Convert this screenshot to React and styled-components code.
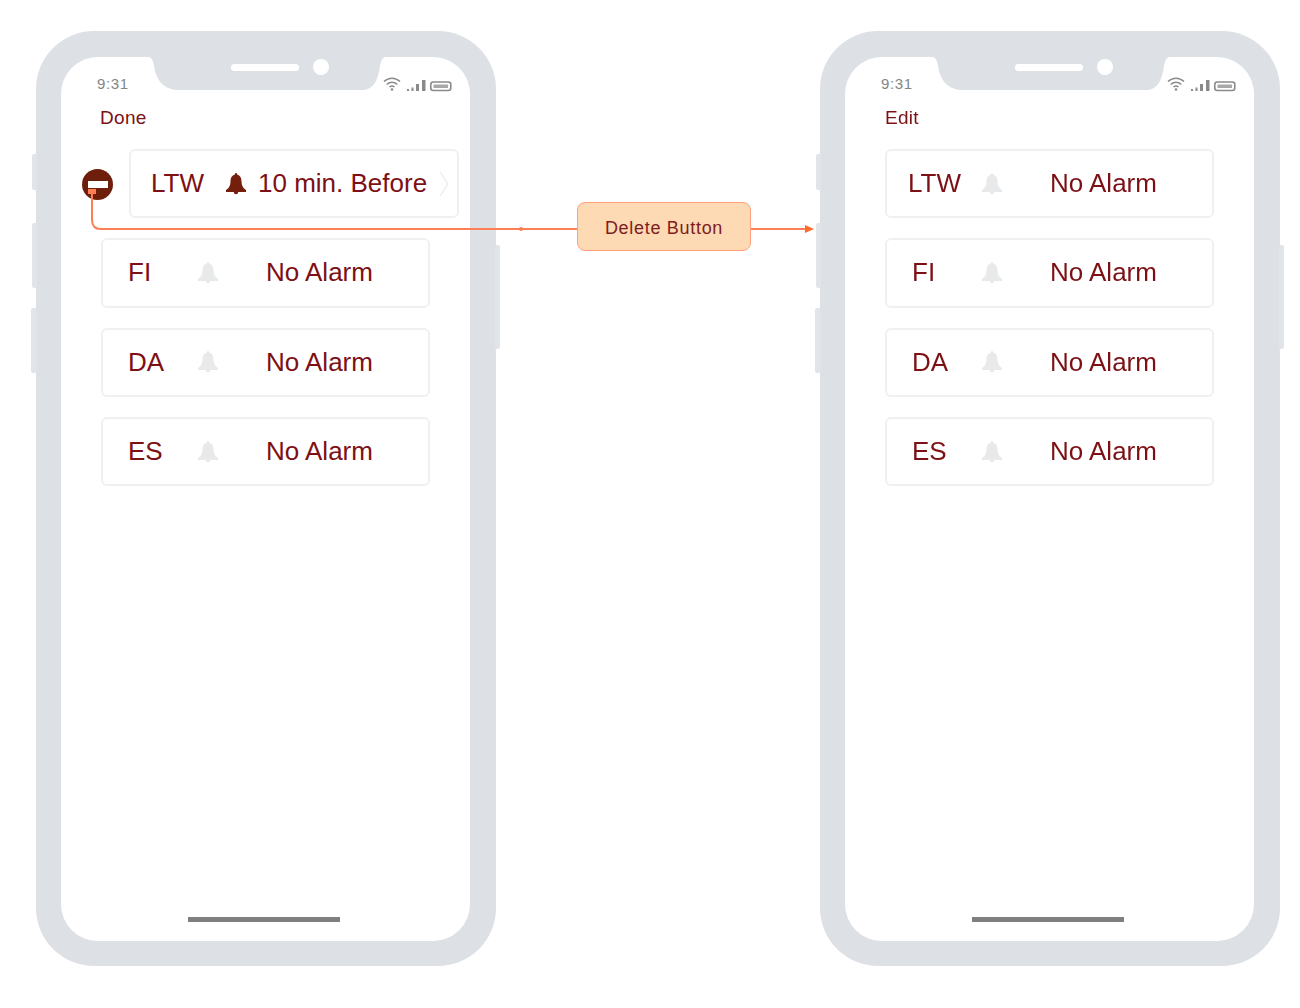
import React from 'react';
import styled, { createGlobalStyle } from 'styled-components';

const GlobalStyle = createGlobalStyle`
  html, body {
    margin: 0;
    background: #fff;
    font-family: "Liberation Sans", Arial, sans-serif;
  }
`;

const maroon = '#7d1014';
const frameGrey = '#dde1e5';

// the reference is a soft, upscaled capture, so the whole stage gets a hair of blur
const Stage = styled.div`
  position: relative;
  display: flex;
  width: 1300px;
  height: 1008px;
  box-sizing: border-box;
  padding: 31px 0 0 36px;
  overflow: hidden;
  filter: blur(0.4px);
`;

const Frame = styled.div`
  position: relative;
  flex: none;
  width: 460px;
  height: 935px;
  box-sizing: border-box;
  padding: 26px 26px 25px 25px;
  background: ${frameGrey};
  border-radius: 58px;
`;

const SideKey = styled.div`
  position: absolute;
  top: ${(p) => p.$top}px;
  ${(p) => (p.$right ? 'right' : 'left')}: ${(p) => -p.$out}px;
  width: ${(p) => p.$out + 1}px;
  height: ${(p) => p.$h}px;
  background: #e1e4e8;
  border-radius: 2px;
`;

const Screen = styled.div`
  position: relative;
  display: flex;
  flex-direction: column;
  height: 884px;
  background: #fff;
  border-radius: 37px;
`;

const Notch = styled.svg`
  position: absolute;
  top: -1px;
  left: 86px;
`;

const StatusBar = styled.div`
  display: flex;
  align-items: center;
  justify-content: space-between;
  height: 18px;
  margin-top: 18px;
  padding: 0 18px 0 36px;
  color: #858585;
  font-size: 15px;
  letter-spacing: 0.6px;
`;

const Clock = styled.span`
  margin-top: -2px;
`;

const NavAction = styled.div`
  height: 21px;
  margin-top: 14px;
  padding-left: ${(p) => p.$left}px;
  color: ${maroon};
  font-size: 19px;
  letter-spacing: 0.3px;
  line-height: 21px;
`;

const AlarmList = styled.div`
  display: flex;
  flex-direction: column;
  gap: 20px;
  margin-top: 21px;
  padding-left: 40px;
`;

const EditingLine = styled.div`
  display: flex;
  align-items: center;
  gap: 16px;
  margin-left: -19px;
`;

const RemoveButton = styled.div`
  flex: none;
  display: flex;
  align-items: center;
  justify-content: center;
  width: 31px;
  height: 31px;
  margin-top: 1px;
  border-radius: 50%;
  background: #6e1f0c;
`;

const RemoveBar = styled.div`
  width: 20px;
  height: 7px;
  background: #fff;
`;

const AlarmRow = styled.div`
  flex: none;
  display: grid;
  grid-template-columns: ${(p) => p.$columns};
  align-items: center;
  width: ${(p) => p.$width || 329}px;
  height: 69.33px;
  box-sizing: border-box;
  border: 2px solid #eef0f2;
  border-radius: 6px;
  color: ${maroon};
  font-size: 26px;
  white-space: nowrap;
`;

const Label = styled.span`
  padding-left: ${(p) => p.$indent}px;
`;

const BellIcon = styled.svg`
  display: block;
  fill: ${(p) => (p.$active ? '#731f0c' : '#e7e9eb')};
`;

const Chevron = styled.svg`
  display: block;
  fill: none;
  stroke: #eef0f2;
  stroke-width: 1.8;
`;

const HomeBar = styled.div`
  width: 152px;
  height: 5px;
  margin: auto 0 19px 127px;
  background: #7f7f7f;
`;

const CalloutColumn = styled.div`
  flex: none;
  width: 324px;
  box-sizing: border-box;
  padding: 171px 0 0 81px;
`;

const Callout = styled.div`
  display: flex;
  align-items: center;
  justify-content: center;
  width: 174px;
  height: 49px;
  box-sizing: border-box;
  padding-top: 3px;
  border: 1.5px solid #ff9f7c;
  border-radius: 8px;
  background: #fdd9b4;
  color: #7d1d1d;
  font-size: 18px;
  letter-spacing: 0.7px;
`;

const Connector = styled.svg`
  position: absolute;
  top: 0;
  left: 0;
  pointer-events: none;
`;

const Bell = ({ active }) => (
  <BellIcon $active={active} width="24" height="24" viewBox="0 0 24 24">
    <rect x="10.800" y="1" width="2.400" height="3" rx="1.200" />
    <path d="M12 2.500c-3.500 0-5.500 3-5.500 7 0 4-1.500 6.500-4.500 8.500v2h20v-2c-3-2-4.500-4.500-4.500-8.500 0-4-2-7-5.500-7z" />
    <path d="M9.800 20a2.200 2.200 0 0 0 4.400 0z" />
  </BellIcon>
);

const StatusIcons = () => (
  <svg width="69" height="16" viewBox="0 0 69 16" fill="none" stroke="#8a8a8a">
    <path d="M1 5.500C5.500 1 12.500 1 17 5.500M3.800 8.500C6.800 5.500 11.200 5.500 14.200 8.500M6.500 11C8 9.700 10 9.700 11.500 11" strokeWidth="1.500" />
    <circle cx="9" cy="13.500" r="1.300" fill="#8a8a8a" stroke="none" />
    <g fill="#8a8a8a" stroke="none">
      <rect x="24" y="13" width="2" height="2" />
      <rect x="28.500" y="11.500" width="2" height="3.500" />
      <rect x="33" y="8" width="3" height="7" />
      <rect x="39" y="4" width="3.500" height="11" />
    </g>
    <rect x="47.800" y="6" width="20" height="8.500" rx="2.500" strokeWidth="1.600" />
    <rect x="50.500" y="8.500" width="14.500" height="3.500" fill="#a8a8a8" stroke="none" />
  </svg>
);

const NotchShape = () => (
  <Notch width="240" height="35" viewBox="0 0 240 35">
    <path
      fill={frameGrey}
      d="M1 0V1C4 1 6 4 7 10C9 25 18 34 31 34H216C226 34 231 25 233 10C234 4 236 1 239 1V0Z"
    />
    <rect x="84" y="8" width="68" height="7" rx="3.500" fill="#fff" />
    <circle cx="174" cy="11" r="8" fill="#fff" />
  </Notch>
);

const plainColumns = '93px 70px 1fr';

const PlainRow = ({ label, indent = 25 }) => (
  <AlarmRow $columns={plainColumns}>
    <Label $indent={indent}>{label}</Label>
    <Bell />
    <span>No Alarm</span>
  </AlarmRow>
);

const Keys = () => (
  <>
    <SideKey $out={4} $top={123} $h={36} />
    <SideKey $out={4} $top={192} $h={65} />
    <SideKey $out={5} $top={277} $h={65} />
    <SideKey $right $out={4} $top={214} $h={104} />
  </>
);

const Phone = ({ action, actionLeft, children }) => (
  <Frame>
    <Keys />
    <Screen>
      <NotchShape />
      <StatusBar>
        <Clock>9:31</Clock>
        <StatusIcons />
      </StatusBar>
      <NavAction $left={actionLeft}>{action}</NavAction>
      <AlarmList>{children}</AlarmList>
      <HomeBar />
    </Screen>
  </Frame>
);

export default function App() {
  return (
    <>
      <GlobalStyle />
      <Stage>
        <Phone action="Done" actionLeft={39}>
          <EditingLine>
            <RemoveButton>
              <RemoveBar />
            </RemoveButton>
            <AlarmRow $width={330} $columns="93px 34px 180px 1fr">
              <Label $indent={20}>LTW</Label>
              <Bell active />
              <span>10 min. Before</span>
              <Chevron width="12" height="26" viewBox="0 0 12 26">
                <path d="M2 1l8 12-8 12" />
              </Chevron>
            </AlarmRow>
          </EditingLine>
          <PlainRow label="FI" />
          <PlainRow label="DA" />
          <PlainRow label="ES" />
        </Phone>

        <CalloutColumn>
          <Callout>Delete Button</Callout>
        </CalloutColumn>

        <Phone action="Edit" actionLeft={40}>
          <PlainRow label="LTW" indent={21} />
          <PlainRow label="FI" />
          <PlainRow label="DA" />
          <PlainRow label="ES" />
        </Phone>

        <Connector width="1300" height="1008" viewBox="0 0 1300 1008">
          <path
            d="M92 190V220Q92 229 101 229H577M751 229H806"
            fill="none"
            stroke="#ff7f55"
            strokeWidth="2"
          />
          <rect x="88" y="189" width="8" height="5" fill="#ff7f55" />
          <circle cx="521" cy="229" r="2" fill="#ff7f55" />
          <path d="M805 225L814 229L805 233Z" fill="#ff6a2e" />
        </Connector>
      </Stage>
    </>
  );
}
